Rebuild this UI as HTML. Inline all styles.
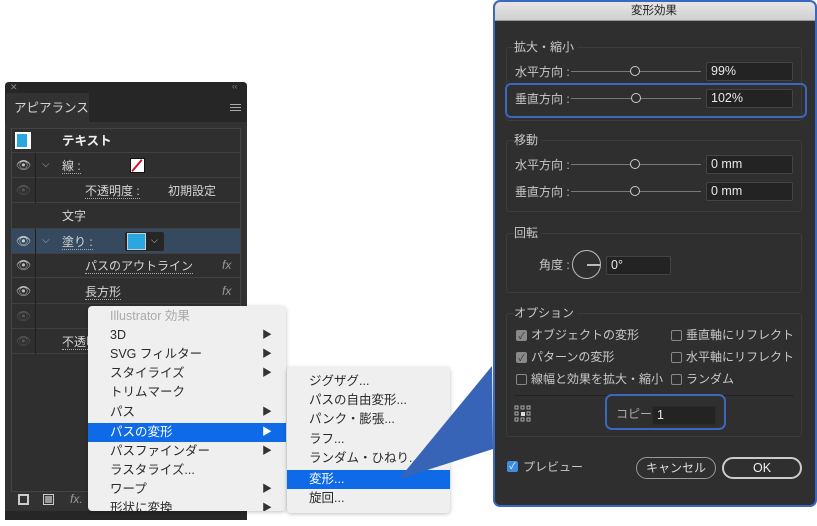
<!DOCTYPE html>
<html><head><meta charset="utf-8"><style>
*{margin:0;padding:0;box-sizing:border-box}
body{width:817px;height:526px;background:#fff;position:relative;overflow:hidden;font-family:"Liberation Sans","Noto Sans CJK JP",sans-serif}
.a{position:absolute}
.t{position:absolute;white-space:nowrap;line-height:1}
.lp{color:#d6d6d6;font-size:12px}
.row{position:absolute;left:11px;width:229px;height:25px;border-bottom:1px solid #404040}
.eye{position:absolute;left:0;top:0;width:25px;height:25px;border-right:1px solid #1f1f1f}
.dot{border-bottom:1px dotted #aaa;padding-bottom:1px}
.mi{position:absolute;left:0;width:198px;height:19px;font-size:12.5px;color:#2a2a2a;padding-left:22px;line-height:19px}
.arr{position:absolute;right:14px;top:0;font-size:10px;color:#333}
.si{position:absolute;left:0;width:163px;height:19px;font-size:12.5px;color:#2a2a2a;padding-left:22px;line-height:19px}
.dl{color:#c8c8c8;font-size:12px}
.box{position:absolute;border:1px solid #3c3c3c;border-radius:3px}
.inp{position:absolute;background:#232323;border:1px solid #444;border-radius:2px;color:#e8e8e8;font-size:12.5px;padding-left:4px;line-height:17px;height:19px}
.sl{position:absolute;height:1px;background:#777}
.knob{position:absolute;width:10px;height:10px;border:1.5px solid #ccc;border-radius:50%;background:#2e2e2e}
.cb{position:absolute;width:11px;height:11px;border:1px solid #888;border-radius:2px}
.cbx{background:#8a8a8a;color:#2e2e2e;font-size:9px;line-height:10px;text-align:center}
</style></head><body>

<div class="a" style="left:5px;top:82px;width:242px;height:438px;background:#323232;border-radius:4px 4px 0 0"></div>
<div class="a" style="left:5px;top:82px;width:242px;height:11px;background:#262626;border-radius:4px 4px 0 0"></div>
<div class="t" style="left:10px;top:83px;color:#888;font-size:9px">✕</div>
<div class="t" style="left:232px;top:83px;color:#888;font-size:8px">‹‹</div>
<div class="a" style="left:5px;top:93px;width:242px;height:29px;background:#262626"></div>
<div class="a" style="left:6px;top:93px;width:83px;height:29px;background:#323232"></div>
<div class="t lp" style="left:14px;top:102px;font-size:12.5px">アピアランス</div>
<div class="a" style="left:230px;top:104px;width:11px;height:1px;background:#aaa;box-shadow:0 3px 0 #aaa,0 6px 0 #aaa"></div>
<div class="a" style="left:11px;top:128px;width:230px;height:364px;border:1px solid #444;background:#2f2f2f"></div>

<div class="row" style="top:128px">
 <div class="a" style="left:4px;top:4px;width:16px;height:17px;background:#fff"><div class="a" style="left:2px;top:2px;width:10px;height:13px;background:#29a8e0"></div></div>
 <div class="t" style="left:51px;top:7px;color:#eee;font-size:12.5px;font-weight:bold">テキスト</div></div>
<div class="row" style="top:153px">
 <div class="eye"><div class="t" style="left:5px;top:6px;color:#bbb;font-size:12px">👁</div></div>
 <div class="t" style="left:31px;top:7px;color:#aaa;font-size:10px">⌵</div>
 <div class="t lp dot" style="left:51px;top:7px">線 :</div>
 <div class="a" style="left:119px;top:5px;width:15px;height:15px;background:#fff;border:1px solid #111"><div class="a" style="left:5px;top:-1px;width:2px;height:15px;background:#d0102a;transform:rotate(40deg)"></div></div></div>
<div class="row" style="top:178px">
 <div class="eye"><div class="t" style="left:5px;top:6px;color:#555;font-size:12px">👁</div></div>
 <div class="t lp dot" style="left:74px;top:7px">不透明度 :</div>
 <div class="t lp" style="left:157px;top:7px">初期設定</div></div>
<div class="row" style="top:204px"><div class="t lp" style="left:51px;top:6px">文字</div></div>
<div class="row" style="top:229px;background:#354a5e">
 <div class="eye"><div class="t" style="left:5px;top:6px;color:#ccc;font-size:12px">👁</div></div>
 <div class="t" style="left:31px;top:7px;color:#aaa;font-size:10px">⌵</div>
 <div class="t lp dot" style="left:51px;top:7px">塗り :</div>
 <div class="a" style="left:114px;top:3px;width:39px;height:19px;background:#262626;border-radius:2px"></div>
 <div class="a" style="left:116px;top:4px;width:19px;height:17px;background:#29a8e0;border:1px solid #ccc"></div>
 <div class="t" style="left:140px;top:7px;color:#ccc;font-size:9px">⌵</div></div>
<div class="row" style="top:253px">
 <div class="eye"><div class="t" style="left:5px;top:6px;color:#bbb;font-size:12px">👁</div></div>
 <div class="t lp dot" style="left:74px;top:7px">パスのアウトライン</div>
 <div class="t" style="left:211px;top:6px;color:#999;font-size:12px;font-style:italic">fx</div></div>
<div class="row" style="top:279px">
 <div class="eye"><div class="t" style="left:5px;top:6px;color:#bbb;font-size:12px">👁</div></div>
 <div class="t lp dot" style="left:74px;top:7px">長方形</div>
 <div class="t" style="left:211px;top:6px;color:#999;font-size:12px;font-style:italic">fx</div></div>
<div class="row" style="top:304px">
 <div class="eye"><div class="t" style="left:5px;top:6px;color:#555;font-size:12px">👁</div></div></div>
<div class="row" style="top:329px">
 <div class="eye"><div class="t" style="left:5px;top:6px;color:#555;font-size:12px">👁</div></div>
 <div class="t lp dot" style="left:51px;top:7px">不透明度</div></div>
<div class="a" style="left:18px;top:494px;width:11px;height:11px;border:2px solid #ccc"></div>
<div class="a" style="left:43px;top:494px;width:11px;height:11px;border:1px solid #ccc;background:#999;box-shadow:inset 0 0 0 1px #323232"></div>
<div class="t" style="left:70px;top:493px;color:#999;font-size:12px;font-style:italic">fx.</div>
<div class="a" style="left:5px;top:511px;width:242px;height:9px;background:#262626"></div>

<div class="a" style="left:88px;top:306px;width:198px;height:205px;background:#efefef;border-radius:4px;box-shadow:0 1px 4px rgba(0,0,0,.25);overflow:hidden">
 <div class="mi" style="top:1px;color:#aaa">Illustrator 効果</div>
 <div class="mi" style="top:20px">3D<span class="arr">▶</span></div>
 <div class="mi" style="top:39px">SVG フィルター<span class="arr">▶</span></div>
 <div class="mi" style="top:58px">スタイライズ<span class="arr">▶</span></div>
 <div class="mi" style="top:77px">トリムマーク</div>
 <div class="mi" style="top:97px">パス<span class="arr">▶</span></div>
 <div class="mi" style="top:117px;background:#0e6ae6;color:#fff">パスの変形<span class="arr" style="color:#fff">▶</span></div>
 <div class="mi" style="top:136px">パスファインダー<span class="arr">▶</span></div>
 <div class="mi" style="top:155px">ラスタライズ...</div>
 <div class="mi" style="top:174px">ワープ<span class="arr">▶</span></div>
 <div class="mi" style="top:193px">形状に変換<span class="arr">▶</span></div>
</div>
<div class="a" style="left:287px;top:367px;width:163px;height:146px;background:#efefef;border-radius:4px;box-shadow:0 1px 4px rgba(0,0,0,.25);overflow:hidden">
 <div class="si" style="top:5px">ジグザグ...</div>
 <div class="si" style="top:24px">パスの自由変形...</div>
 <div class="si" style="top:43px">パンク・膨張...</div>
 <div class="si" style="top:63px">ラフ...</div>
 <div class="si" style="top:82px">ランダム・ひねり...</div>
 <div class="si" style="top:103px;background:#0e6ae6;color:#fff">変形...</div>
 <div class="si" style="top:122px">旋回...</div>
</div>
<svg class="a" style="left:0;top:0" width="817" height="526"><polygon points="399,479 492,366 493,449" fill="#3864b8"/></svg>

<div class="a" style="left:493px;top:0;width:324px;height:507px;background:#2f2f2f;border:2px solid #3a68c0;border-radius:7px;overflow:hidden">
 <div class="a" style="left:0;top:0;width:320px;height:19px;background:linear-gradient(#e6e6e6,#d0d0d0);border-bottom:1px solid #999"></div>
 <div class="t" style="left:136px;top:4px;color:#222;font-size:11.5px">変形効果</div>
</div>
<div class="box" style="left:506px;top:47px;width:296px;height:74px"></div>
<div class="t dl" style="left:514px;top:41px;background:#2f2f2f;padding:0 3px 0 0">拡大・縮小</div>
<div class="t dl" style="left:515px;top:66px">水平方向 :</div>
<div class="sl" style="left:571px;top:71px;width:130px"></div><div class="knob" style="left:630px;top:66px"></div>
<div class="inp" style="left:706px;top:62px;width:87px">99%</div>
<div class="a" style="left:505px;top:83px;width:302px;height:35px;border:2px solid #3a68c0;border-radius:6px"></div>
<div class="t dl" style="left:515px;top:93px">垂直方向 :</div>
<div class="sl" style="left:571px;top:98px;width:130px"></div><div class="knob" style="left:631px;top:93px"></div>
<div class="inp" style="left:706px;top:89px;width:87px">102%</div>

<div class="box" style="left:506px;top:140px;width:296px;height:72px"></div>
<div class="t dl" style="left:514px;top:134px;background:#2f2f2f;padding-right:3px">移動</div>
<div class="t dl" style="left:515px;top:159px">水平方向 :</div>
<div class="sl" style="left:571px;top:164px;width:130px"></div><div class="knob" style="left:630px;top:159px"></div>
<div class="inp" style="left:706px;top:155px;width:87px">0 mm</div>
<div class="t dl" style="left:515px;top:186px">垂直方向 :</div>
<div class="sl" style="left:571px;top:191px;width:130px"></div><div class="knob" style="left:630px;top:186px"></div>
<div class="inp" style="left:706px;top:182px;width:87px">0 mm</div>

<div class="box" style="left:506px;top:233px;width:296px;height:60px"></div>
<div class="t dl" style="left:514px;top:227px;background:#2f2f2f;padding-right:3px">回転</div>
<div class="t dl" style="left:539px;top:259px">角度 :</div>
<div class="a" style="left:572px;top:250px;width:29px;height:29px;border:1.5px solid #bbb;border-radius:50%"></div>
<div class="a" style="left:587px;top:264px;width:13px;height:1.5px;background:#bbb"></div>
<div class="inp" style="left:606px;top:256px;width:65px">0°</div>

<div class="box" style="left:506px;top:313px;width:296px;height:124px"></div>
<div class="t dl" style="left:514px;top:307px;background:#2f2f2f;padding-right:3px">オプション</div>
<div class="cb cbx" style="left:516px;top:330px">✓</div><div class="t dl" style="left:531px;top:329px">オブジェクトの変形</div>
<div class="cb cbx" style="left:516px;top:352px">✓</div><div class="t dl" style="left:531px;top:351px">パターンの変形</div>
<div class="cb" style="left:516px;top:374px"></div><div class="t dl" style="left:531px;top:373px">線幅と効果を拡大・縮小</div>
<div class="cb" style="left:671px;top:330px"></div><div class="t dl" style="left:686px;top:329px">垂直軸にリフレクト</div>
<div class="cb" style="left:671px;top:352px"></div><div class="t dl" style="left:686px;top:351px">水平軸にリフレクト</div>
<div class="cb" style="left:671px;top:374px"></div><div class="t dl" style="left:686px;top:373px">ランダム</div>
<div class="a" style="left:515px;top:395px;width:279px;height:1px;background:#222"></div>
<svg class="a" style="left:514px;top:405px" width="18" height="18"><g fill="none" stroke="#aaa" stroke-width="1"><rect x="1" y="1" width="3" height="3"/><rect x="7" y="1" width="3" height="3"/><rect x="13" y="1" width="3" height="3"/><rect x="1" y="7" width="3" height="3"/><rect x="13" y="7" width="3" height="3"/><rect x="1" y="13" width="3" height="3"/><rect x="7" y="13" width="3" height="3"/><rect x="13" y="13" width="3" height="3"/></g><rect x="7" y="7" width="4" height="4" fill="#ddd"/></svg>
<div class="a" style="left:605px;top:394px;width:121px;height:36px;border:2px solid #3a68c0;border-radius:7px"></div>
<div class="t dl" style="left:616px;top:408px;color:#aaa">コピー</div>
<div class="inp" style="left:652px;top:406px;width:64px;border-color:#2a2a2a">1</div>

<div class="a" style="left:507px;top:461px;width:11px;height:11px;background:#3d8ee0;border-radius:2px;color:#fff;font-size:9px;line-height:11px;text-align:center">✓</div>
<div class="t dl" style="left:523px;top:461px">プレビュー</div>
<div class="a" style="left:636px;top:457px;width:80px;height:22px;border:1px solid #999;border-radius:11px;color:#ddd;font-size:12px;text-align:center;line-height:20px">キャンセル</div>
<div class="a" style="left:722px;top:457px;width:80px;height:22px;border:2px solid #ccc;border-radius:11px;color:#eee;font-size:12.5px;text-align:center;line-height:18px">OK</div>
</body></html>
